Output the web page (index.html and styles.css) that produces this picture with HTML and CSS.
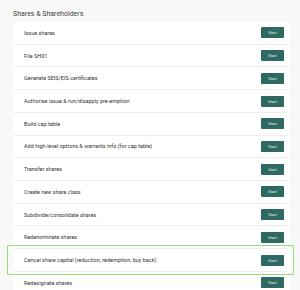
FILE: index.html
```html
<!DOCTYPE html>
<html lang="en">
<head>
    <meta charset="UTF-8">
    <meta name="viewport" content="width=device-width, initial-scale=1.0">
    <title>Shares &amp; Shareholders</title>
    <link rel="stylesheet" href="styles.css">
</head>
<body>
    <div class="wrapper">
        <h2 class="section-title">Shares &amp; Shareholders</h2>
        <div class="task-list">
            <div class="task"><span class="task-name">Issue shares</span><button class="start-btn">Start</button></div>
            <div class="task"><span class="task-name">File SH01</span><button class="start-btn">Start</button></div>
            <div class="task"><span class="task-name">Generate SEIS/EIS certificates</span><button class="start-btn">Start</button></div>
            <div class="task"><span class="task-name">Authorise issue &amp; run/disapply pre-emption</span><button class="start-btn">Start</button></div>
            <div class="task"><span class="task-name">Build cap table</span><button class="start-btn">Start</button></div>
            <div class="task"><span class="task-name">Add high-level options &amp; warrants info (for cap table)</span><button class="start-btn">Start</button></div>
            <div class="task"><span class="task-name">Transfer shares</span><button class="start-btn">Start</button></div>
            <div class="task"><span class="task-name">Create new share class</span><button class="start-btn">Start</button></div>
            <div class="task"><span class="task-name">Subdivide/consolidate shares</span><button class="start-btn">Start</button></div>
            <div class="task"><span class="task-name">Redenominate shares</span><button class="start-btn">Start</button></div>
            <div class="task highlighted"><span class="task-name">Cancel share capital (reduction, redemption, buy back)</span><button class="start-btn">Start</button></div>
            <div class="task"><span class="task-name">Redesignate shares</span><button class="start-btn">Start</button></div>
        </div>
    </div>
</body>
</html>
```

FILE: styles.css
```css
* {
    margin: 0;
    padding: 0;
    box-sizing: border-box;
    font-family: "Roboto", "Liberation Sans", sans-serif;
}

body {
    background: #f8f8f8;
    overflow: hidden;
}

.wrapper {
    padding: 9px 10px 0 13px;
}

.section-title {
    font-size: 7px;
    font-weight: 400;
    color: #444;
    line-height: 10px;
    margin-bottom: 3px;
}

.task-list {
    background: #fff;
    width: 277px;
}

.task {
    position: relative;
    display: flex;
    justify-content: space-between;
    align-items: center;
    height: 22.73px;
    padding: 0 6px 0 11px;
    border-bottom: 1px solid #efefef;
}

.task-name {
    font-size: 5.5px;
    color: #333;
}

.start-btn {
    width: 23px;
    height: 11px;
    background: #2f6a62;
    color: #e8f0ee;
    border: none;
    border-radius: 1px;
    font-size: 4px;
    cursor: pointer;
}

.highlighted::after {
    content: "";
    position: absolute;
    top: -4px;
    left: -6px;
    right: -4px;
    bottom: -4px;
    border: 1.5px solid #8fe07a;
    border-radius: 1px;
    pointer-events: none;
}
```
